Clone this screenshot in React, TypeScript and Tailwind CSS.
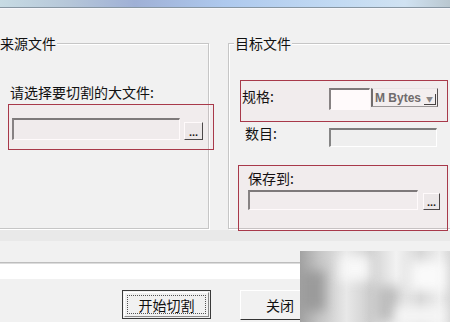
import React from "react"

const cjk = "font-['Noto_Sans_CJK_SC','Noto_Sans',sans-serif]"

function TextBox({ className }: { className: string }) {
  return (
    <div
      className={`border-t-2 border-l-2 border-r border-b border-t-[#7c7c7c] border-l-[#858585] border-r-white border-b-white ${className}`}
    />
  )
}

function DotsButton({ className }: { className: string }) {
  return (
    <div
      className={`flex items-end justify-center border border-t-white border-l-white border-r-[#4a4a4a] border-b-[#4a4a4a] bg-[#ececec] pb-[3px] text-[11px] leading-[8px] font-bold text-[#222] font-['Liberation_Sans',sans-serif] ${className}`}
    >
      ...
    </div>
  )
}

function GroupBox({
  title,
  titleLeft,
  className,
  children,
}: {
  title: string
  titleLeft: string
  className: string
  children: React.ReactNode
}) {
  return (
    <div
      className={`relative border border-[#c6c6c6] shadow-[inset_1px_1px_0_#fff,1px_1px_0_#fff] ${className}`}
    >
      <span
        className={`absolute -top-[9px] bg-[#f1f1f1] px-[1px] text-[14px] leading-[16px] text-[#111] ${titleLeft}`}
      >
        {title}
      </span>
      {children}
    </div>
  )
}

export default function App() {
  return (
    <div
      className={`relative flex h-[322px] w-[450px] flex-col overflow-hidden bg-[#f1f1f1] ${cjk}`}
    >
      {/* window title strip */}
      <div className="h-[7px] bg-[linear-gradient(90deg,#c7dbe4_0%,#b6c7d9_15%,#9fb0d6_30%,#aec9ee_50%,#c2daf3_75%,#d0e2f2_90%,#b9c7d0_100%)]" />
      <div className="h-px bg-[#8796a2]" />
      <div className="h-px bg-[#f6f6fb]" />

      {/* group boxes */}
      <div className="mt-[34px] flex items-start">
        <GroupBox
          title="来源文件"
          titleLeft="left-[8px]"
          className="-ml-[10px] h-[186px] w-[219px] shrink-0"
        >
          <div className="flex flex-col pl-[19px] pt-[40px]">
            <span className="text-[14px] leading-[16px] text-[#111]">
              请选择要切割的大文件:
            </span>
            <div className="mt-[18px] flex items-end">
              <TextBox className="ml-[2px] h-[22px] w-[168px] bg-[#f0f0f0]" />
              <DotsButton className="ml-[4px] h-[18px] w-[19px]" />
            </div>
          </div>
        </GroupBox>

        <GroupBox
          title="目标文件"
          titleLeft="left-[5px]"
          className="ml-[19px] h-[186px] w-[240px] shrink-0"
        >
          <div className="flex flex-col pl-[13px] pt-[44px]">
            <div className="flex items-start">
              <span className="w-[87px] text-[14px] leading-[16px] text-[#111]">
                规格:
              </span>
              <TextBox className="h-[22px] w-[41px] bg-white" />
              <div className="ml-px flex h-[19px] w-[67px] items-center border-l-2 border-t border-r border-b border-l-[#6f6f6f] border-t-[#e8e8e8] border-r-[#555] border-b-[#9a9a9a] bg-[#f3f3f3] pl-[2px]">
                <span className="text-[12px] leading-[14px] font-bold text-[#6e6e6e] font-['Liberation_Sans',sans-serif]">
                  M Bytes
                </span>
                <div className="mr-px ml-auto mt-[4px] flex h-[11px] w-[12px] items-center justify-center border-r border-b border-r-[#444] border-b-[#444] text-[7px] leading-none text-[#888]">
                  ▼
                </div>
              </div>
            </div>

            <div className="mt-[15px] flex items-start">
              <span className="ml-[3px] w-[84px] text-[14px] leading-[16px] text-[#111]">
                数目:
              </span>
              <TextBox className="mt-[3px] h-[19px] w-[108px] bg-[#efefef]" />
            </div>

            <div className="mt-[23px] flex flex-col pl-[6px]">
              <span className="text-[14px] leading-[16px] text-[#111]">
                保存到:
              </span>
              <div className="mt-[4px] flex items-end">
                <TextBox className="h-[20px] w-[170px] bg-[#f1f1f1]" />
                <DotsButton className="ml-[5px] h-[17px] w-[17px]" />
              </div>
            </div>
          </div>
        </GroupBox>
      </div>

      {/* lower panel */}
      <div className="mt-px h-[11px] bg-[#e9e9e9]" />
      <div className="h-[21px]" />
      <div className="h-px bg-[#bdbdbd]" />
      <div className="h-px bg-[#dcdcdc]" />
      <div className="h-[15px] bg-white" />

      <div className="mt-[11px] flex pl-[122px]">
        <div className="flex h-[29px] w-[89px] items-stretch border border-[#3a3a3a] bg-[#f1f1f1] p-px">
          <div className="flex flex-1 items-stretch border border-t-white border-l-white border-r-[#8a8a8a] border-b-[#8a8a8a] p-[2px]">
            <div className="flex flex-1 items-center justify-center border border-dotted border-[#555] text-[14px] leading-[16px] text-[#111]">
              开始切割
            </div>
          </div>
        </div>
        <div className="ml-[29px] flex h-[30px] w-[80px] items-center justify-center border border-t-white border-l-white border-r-[#444] border-b-[#333] bg-[#f1f1f1] text-[14px] leading-[16px] text-[#111]">
          关闭
        </div>
      </div>

      {/* red annotation frames */}
      <div className="absolute left-[8px] top-[104px] h-[46px] w-[206px] border border-[#a8394a] bg-[rgba(230,0,40,0.02)]" />
      <div className="absolute left-[240px] top-[80px] h-[42px] w-[208px] border border-[#a8394a] bg-[rgba(230,0,40,0.02)]" />
      <div className="absolute left-[238px] top-[165px] h-[66px] w-[210px] border border-[#a8394a] bg-[rgba(230,0,40,0.02)]" />

      {/* blurred watermark */}
      <div className="absolute left-[300px] top-[251px] h-[75px] w-[155px] overflow-hidden bg-[linear-gradient(90deg,#a2a2a2_0%,#c4c4c4_12%,#e8e8e8_30%,#cfcfcf_45%,#f2f2f2_62%,#d6d6d6_78%,#ededed_90%,#cfcfcf_100%)]">
        <div className="absolute left-[0px] top-[20px] h-[40px] w-[25px] bg-[#9a9a9a] blur-[6px]" />
        <div className="absolute left-[40px] top-[5px] h-[25px] w-[30px] bg-[#f8f8f8] blur-[6px]" />
        <div className="absolute left-[75px] top-[35px] h-[35px] w-[25px] bg-[#bdbdbd] blur-[6px]" />
        <div className="absolute left-[110px] top-[10px] h-[30px] w-[35px] bg-[#fafafa] blur-[6px]" />
        <div className="absolute left-[95px] top-[55px] h-[20px] w-[50px] bg-[#f5f5f5] blur-[6px]" />
      </div>
    </div>
  )
}
